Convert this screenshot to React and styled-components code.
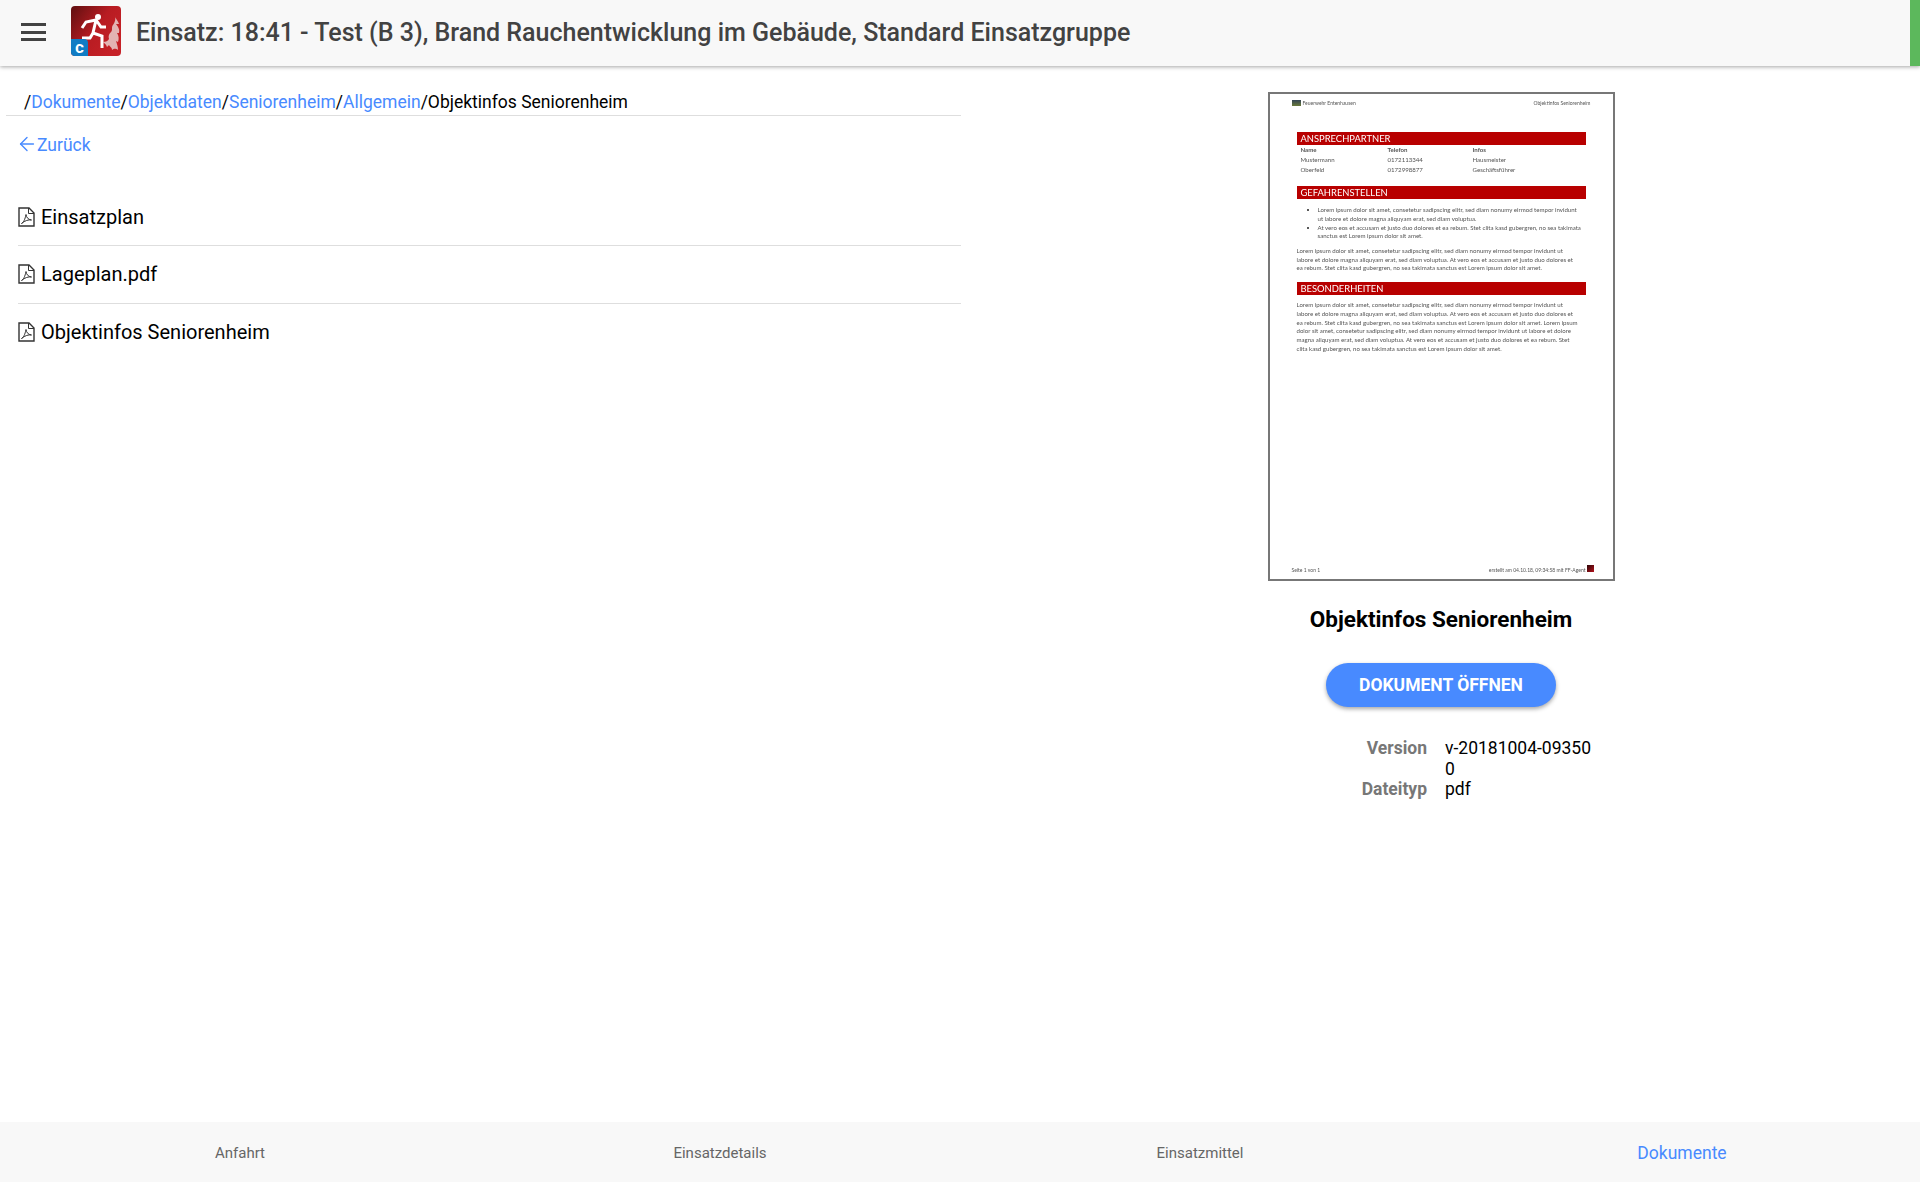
import styled, { createGlobalStyle } from 'styled-components'
import { ArrowLeft } from 'lucide-react'

const blue = '#488aff'

const GlobalStyle = createGlobalStyle`
    html, body {
        margin: 0;
        padding: 0;
        background: white;
        font-family: Roboto, "Liberation Sans", sans-serif;
    }
    * {
        box-sizing: border-box;
    }
`
const Page = styled.div`
    height: 1182px;
    display: flex;
    flex-direction: column;
    overflow: hidden;
`
const Header = styled.header`
    height: 66px;
    flex: none;
    display: flex;
    align-items: center;
    background: #f8f8f8;
    box-shadow: 0 1px 4px rgba(0, 0, 0, 0.35);
    position: relative;
    z-index: 1;
`
const MenuButton = styled.button`
    width: 25px;
    height: 18px;
    margin: 0 25px 2px 21px;
    padding: 0;
    border: 0;
    background: none;
    display: flex;
    flex-direction: column;
    justify-content: space-between;
`
const MenuBar = styled.span`
    display: block;
    height: 3px;
    background: #424242;
`
const Logo = styled.svg`
    width: 50px;
    height: 50px;
    flex: none;
    display: block;
    margin-bottom: 4px;
`
const Title = styled.h1`
    flex: 1;
    margin: 0 0 2px 15px;
    font-size: 25px;
    font-weight: 500;
    color: #424242;
    white-space: nowrap;
`
const StatusBar = styled.div`
    width: 10px;
    align-self: stretch;
    background: #5cb85c;
`
const Main = styled.main`
    flex: 1;
    display: flex;
    min-height: 0;
`
const LeftColumn = styled.section`
    width: 961px;
    flex: none;
`
const Breadcrumb = styled.nav`
    height: 50px;
    margin-left: 6px;
    padding: 26px 0 0 18px;
    border-bottom: 1px solid #dedede;
    font-size: 17.5px;
    line-height: 21px;
    color: black;
`
const CrumbLink = styled.a`
    color: ${blue};
`
const BackLink = styled.a`
    display: inline-flex;
    align-items: center;
    margin: 17px 0 0 16px;
    font-size: 17.5px;
    line-height: 24px;
    color: ${blue};
    svg {
        margin: -3px -1px 0 0;
    }
`
const FileList = styled.ul`
    list-style: none;
    margin: 30px 0 0 18px;
    padding: 0;
`
const FileRow = styled.li`
    height: 57.5px;
    display: flex;
    align-items: center;
    gap: 6px;
    font-size: 20px;
    color: black;
    border-bottom: 1px solid #dedede;
    &:last-child {
        border-bottom: 0;
    }
`
const PdfGlyph = styled.svg`
    width: 17px;
    height: 20px;
    flex: none;
    color: #333;
`
const RightColumn = styled.aside`
    flex: 1;
    display: flex;
    flex-direction: column;
    align-items: center;
    padding: 26px 0 0 1px;
`
const Preview = styled.div`
    width: 347px;
    height: 489px;
    flex: none;
    border: 2px solid #777;
    padding: 4px 22px 6px 22px;
    display: flex;
    flex-direction: column;
    background: white;
    font-family: Lato, "Open Sans", sans-serif;
    font-size: 6.1px;
    color: #555;
    white-space: nowrap;
    filter: blur(0.25px);
`
const PreviewHead = styled.div`
    display: flex;
    justify-content: space-between;
    align-items: center;
    height: 10px;
    margin-bottom: 24px;
    font-size: 5px;
`
const PreviewBrand = styled.span`
    display: flex;
    align-items: center;
    gap: 2px;
`
const BrandMark = styled.span`
    width: 9px;
    height: 6px;
    background: linear-gradient(#345, #6a7a3a);
`
const SectionBar = styled.div`
    height: 13px;
    margin: 0 5px 0 5px;
    padding-left: 4px;
    background: #b80000;
    color: white;
    font-size: 9.4px;
    line-height: 14px;
`
const ContactTable = styled.div`
    display: grid;
    grid-template-columns: 87px 85px 1fr;
    grid-auto-rows: 10.4px;
    align-items: center;
    margin: -1px 0 11px 9px;
`
const ContactHead = styled.b`
    font-weight: 700;
`
const Bullets = styled.ul`
    margin: 7px 0 6px 0;
    padding: 0 0 0 26px;
    line-height: 8.7px;
    li::marker {
        color: #222;
    }
`
const Paragraph = styled.p`
    margin: 0 0 9px 5px;
    line-height: 8.7px;
`
const BesonderText = styled(Paragraph)`
    margin-top: 6px;
`
const PreviewFoot = styled.div`
    margin-top: auto;
    display: flex;
    justify-content: space-between;
    align-items: center;
    font-size: 5px;
`
const FootRight = styled.span`
    display: flex;
    align-items: center;
    gap: 1px;
`
const AgentMark = styled.span`
    width: 7px;
    height: 7px;
    margin: -4px -3px 0 0;
    background: linear-gradient(135deg, #2a0508, #b5121b);
`
const DocTitle = styled.h2`
    margin: 25px 0 0;
    font-size: 22.5px;
    line-height: 26px;
    font-weight: 700;
    color: black;
`
const OpenButton = styled.button`
    width: 230px;
    height: 44px;
    margin-top: 31px;
    border: 0;
    border-radius: 22px;
    background: ${blue};
    color: white;
    font-family: inherit;
    font-size: 17.5px;
    font-weight: 700;
    text-transform: uppercase;
    box-shadow: 0 2px 4px rgba(0, 0, 0, 0.35);
`
const InfoTable = styled.dl`
    width: 360px;
    margin: 31px 0 0;
    display: grid;
    grid-template-columns: 166px 150px;
    column-gap: 18px;
    font-size: 17.5px;
    line-height: 20.5px;
`
const InfoLabel = styled.dt`
    text-align: right;
    font-weight: 700;
    color: #777;
`
const InfoValue = styled.dd`
    margin: 0;
    color: black;
    word-break: break-all;
`
const Footer = styled.footer`
    height: 60px;
    flex: none;
    display: grid;
    grid-template-columns: repeat(4, 1fr);
    background: #f8f8f8;
`
const Tab = styled.a`
    display: flex;
    align-items: center;
    justify-content: center;
    padding: ${props => (props.$active ? '1px 0 0 4px' : '1px 0 0 0')};
    font-size: ${props => (props.$active ? '17.5px' : '15px')};
    color: ${props => (props.$active ? blue : '#666')};
`

const crumbs = ['Dokumente', 'Objektdaten', 'Seniorenheim', 'Allgemein']
const files = ['Einsatzplan', 'Lageplan.pdf', 'Objektinfos Seniorenheim']
const tabs = ['Anfahrt', 'Einsatzdetails', 'Einsatzmittel', 'Dokumente']

function AppLogo() {
    return (
        <Logo viewBox="0 0 50 50">
            <defs>
                <linearGradient id="logoRed" x1="0" y1="0" x2="1" y2="0.7">
                    <stop offset="0" stopColor="#5f0f10" />
                    <stop offset="0.55" stopColor="#b81c22" />
                    <stop offset="1" stopColor="#c62127" />
                </linearGradient>
            </defs>
            <rect width="50" height="50" rx="4" fill="url(#logoRed)" />
            <path d="M44 9c0 4 3 5 4 9l-3 0c2 3 4 5 3 9l-2 0c2 3 2 6 1 9l-2-1c1 3 2 6 2 9-3-2-4-1-6 0 0-3-2-3-3-5l-2 2c-1-3-3-4-4-5 3 0 5-1 6-3-1-3 0-5 2-7 2-2 0-5 2-7 2-3 3-6 2-10z" fill="#e3b3b3" />
            <circle cx="27" cy="11" r="3" fill="white" />
            <path d="M11 22l4-6 10-2 5 7h5M25 14l-3 13 9 3v12M22 27l-3 5h-8" fill="none" stroke="white" strokeWidth="3" strokeLinejoin="miter" />
            <path d="M0 33h13a4 4 0 0 1 4 4v13H4a4 4 0 0 1-4-4z" fill="#0f7cc4" />
            <text x="8.5" y="46.5" textAnchor="middle" fontFamily="Roboto, sans-serif" fontWeight="900" fontSize="13" fill="white">C</text>
        </Logo>
    )
}

function PdfIcon() {
    return (
        <PdfGlyph viewBox="0 0 17 20" fill="none" stroke="currentColor">
            <path d="M1 1h10l5 5v13H1z" strokeWidth="1.4" />
            <path d="M10.5 1v5.5H16" strokeWidth="1" />
            <path d="M3.5 16.5c2-1 3.5-4 4.5-9 .5 3 2 5 5.5 5.5-3-.5-6.5.5-10 3.5z" strokeWidth="1" />
        </PdfGlyph>
    )
}

function DocumentPreview() {
    return (
        <Preview>
            <PreviewHead>
                <PreviewBrand><BrandMark />Feuerwehr Entenhausen</PreviewBrand>
                <span>Objektinfos Seniorenheim</span>
            </PreviewHead>
            <SectionBar>ANSPRECHPARTNER</SectionBar>
            <ContactTable>
                <ContactHead>Name</ContactHead><ContactHead>Telefon</ContactHead><ContactHead>Infos</ContactHead>
                <span>Mustermann</span><span>0172113344</span><span>Hausmeister</span>
                <span>Oberfeld</span><span>0172998877</span><span>Geschäftsführer</span>
            </ContactTable>
            <SectionBar>GEFAHRENSTELLEN</SectionBar>
            <Bullets>
                <li>Lorem ipsum dolor sit amet, consetetur sadipscing elitr, sed diam nonumy eirmod tempor invidunt<br />ut labore et dolore magna aliquyam erat, sed diam voluptua.</li>
                <li>At vero eos et accusam et justo duo dolores et ea rebum. Stet clita kasd gubergren, no sea takimata<br />sanctus est Lorem ipsum dolor sit amet.</li>
            </Bullets>
            <Paragraph>
                Lorem ipsum dolor sit amet, consetetur sadipscing elitr, sed diam nonumy eirmod tempor invidunt ut<br />
                labore et dolore magna aliquyam erat, sed diam voluptua. At vero eos et accusam et justo duo dolores et<br />
                ea rebum. Stet clita kasd gubergren, no sea takimata sanctus est Lorem ipsum dolor sit amet.
            </Paragraph>
            <SectionBar>BESONDERHEITEN</SectionBar>
            <BesonderText>
                Lorem ipsum dolor sit amet, consetetur sadipscing elitr, sed diam nonumy eirmod tempor invidunt ut<br />
                labore et dolore magna aliquyam erat, sed diam voluptua. At vero eos et accusam et justo duo dolores et<br />
                ea rebum. Stet clita kasd gubergren, no sea takimata sanctus est Lorem ipsum dolor sit amet. Lorem ipsum<br />
                dolor sit amet, consetetur sadipscing elitr, sed diam nonumy eirmod tempor invidunt ut labore et dolore<br />
                magna aliquyam erat, sed diam voluptua. At vero eos et accusam et justo duo dolores et ea rebum. Stet<br />
                clita kasd gubergren, no sea takimata sanctus est Lorem ipsum dolor sit amet.
            </BesonderText>
            <PreviewFoot>
                <span>Seite 1 von 1</span>
                <FootRight>erstellt am 04.10.18, 09:34:58 mit FF-Agent <AgentMark /></FootRight>
            </PreviewFoot>
        </Preview>
    )
}

export default function App() {
    return (
        <Page>
            <GlobalStyle />
            <Header>
                <MenuButton>
                    <MenuBar /><MenuBar /><MenuBar />
                </MenuButton>
                <AppLogo />
                <Title>Einsatz: 18:41 - Test (B 3), Brand Rauchentwicklung im Gebäude, Standard Einsatzgruppe</Title>
                <StatusBar />
            </Header>
            <Main>
                <LeftColumn>
                    <Breadcrumb>
                        {crumbs.map(crumb => (
                            <span key={crumb}>/<CrumbLink>{crumb}</CrumbLink></span>
                        ))}
                        /Objektinfos Seniorenheim
                    </Breadcrumb>
                    <BackLink><ArrowLeft size={22} strokeWidth={1.5} />Zurück</BackLink>
                    <FileList>
                        {files.map(file => (
                            <FileRow key={file}><PdfIcon />{file}</FileRow>
                        ))}
                    </FileList>
                </LeftColumn>
                <RightColumn>
                    <DocumentPreview />
                    <DocTitle>Objektinfos Seniorenheim</DocTitle>
                    <OpenButton>Dokument öffnen</OpenButton>
                    <InfoTable>
                        <InfoLabel>Version</InfoLabel>
                        <InfoValue>v-20181004-093500</InfoValue>
                        <InfoLabel>Dateityp</InfoLabel>
                        <InfoValue>pdf</InfoValue>
                    </InfoTable>
                </RightColumn>
            </Main>
            <Footer>
                {tabs.map(tab => (
                    <Tab key={tab} $active={tab === 'Dokumente'}>{tab}</Tab>
                ))}
            </Footer>
        </Page>
    )
}
